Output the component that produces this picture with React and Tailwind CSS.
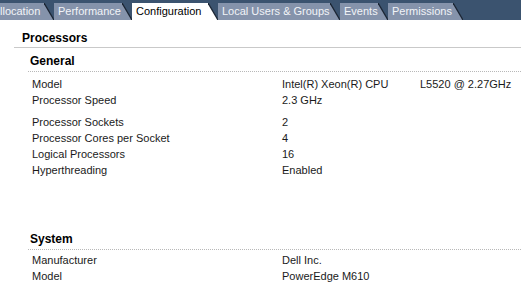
const tabs = [
  { label: "llocation", width: "w-[44px]", pad: "pl-0" },
  { label: "Performance", width: "w-[68px]" },
  { label: "Configuration", width: "w-[76px]", active: true },
  { label: "Local Users & Groups", width: "w-[112px]" },
  { label: "Events", width: "w-[38px]" },
  { label: "Permissions", width: "w-[65px]" },
];

const Slant = ({ active }) => (
  <svg width="10" height="17" viewBox="0 0 10 17" className="block shrink-0">
    <polygon points="0,0 10,17 0,17" fill={active ? "#ffffff" : "#8593ab"} />
    <line x1="0" y1="0" x2="10" y2="17" stroke="#1b2533" strokeWidth="1.3" />
  </svg>
);

const Tab = ({ label, width, active, pad = "pl-[4px]" }) => (
  <div className="flex items-end">
    <div
      className={`${width} ${pad} flex h-[17px] items-center overflow-hidden whitespace-nowrap text-[11px] leading-none ${
        active ? "bg-white text-black" : "bg-[#8593ab] text-[#f2f4f8]"
      }`}
    >
      {label}
    </div>
    <Slant active={active} />
  </div>
);

const Row = ({ label, value, extra }) => (
  <div className="flex h-[16px] items-center whitespace-nowrap">
    <div className="w-[250px] shrink-0">{label}</div>
    <div className="w-[138px] shrink-0">{value}</div>
    {extra ? <div>{extra}</div> : null}
  </div>
);

export default function App() {
  return (
    <div
      className="h-[287px] w-[521px] overflow-hidden bg-white text-[11px] text-[#1a1a1a]"
      style={{ fontFamily: '"Liberation Sans", Arial, sans-serif' }}
    >
      <div className="flex h-[20px] items-end bg-[#3b536f]">
        {tabs.map((tab) => (
          <Tab key={tab.label} {...tab} />
        ))}
      </div>

      <div className="pl-[14px]">
        <div className="border-b border-[#c9c9c9] pb-[1px] pl-[8px] pt-[11px] text-[12px] font-bold leading-[15px] text-black">
          Processors
        </div>
      </div>

      <div className="pl-[28px]">
        <div className="border-b border-dotted border-[#b8b8b8] pb-[2px] pl-[2px] pt-[6px] text-[12px] font-bold leading-[15px] text-black">
          General
        </div>
        <div className="pl-[4px] pt-[4px]">
          <Row label="Model" value="Intel(R) Xeon(R) CPU" extra="L5520  @ 2.27GHz" />
          <Row label="Processor Speed" value="2.3 GHz" />
          <div className="h-[6px]" />
          <Row label="Processor Sockets" value="2" />
          <Row label="Processor Cores per Socket" value="4" />
          <Row label="Logical Processors" value="16" />
          <Row label="Hyperthreading" value="Enabled" />
        </div>

        <div className="h-[54px]" />

        <div className="border-b border-dotted border-[#b8b8b8] pb-[2px] pl-[2px] text-[12px] font-bold leading-[15px] text-black">
          System
        </div>
        <div className="pl-[4px] pt-[2px]">
          <Row label="Manufacturer" value="Dell Inc." />
          <Row label="Model" value="PowerEdge M610" />
          <Row label="BIOS Version" value="Phoenix Technologies LTD 1.2.6" />
        </div>
      </div>
    </div>
  );
}
